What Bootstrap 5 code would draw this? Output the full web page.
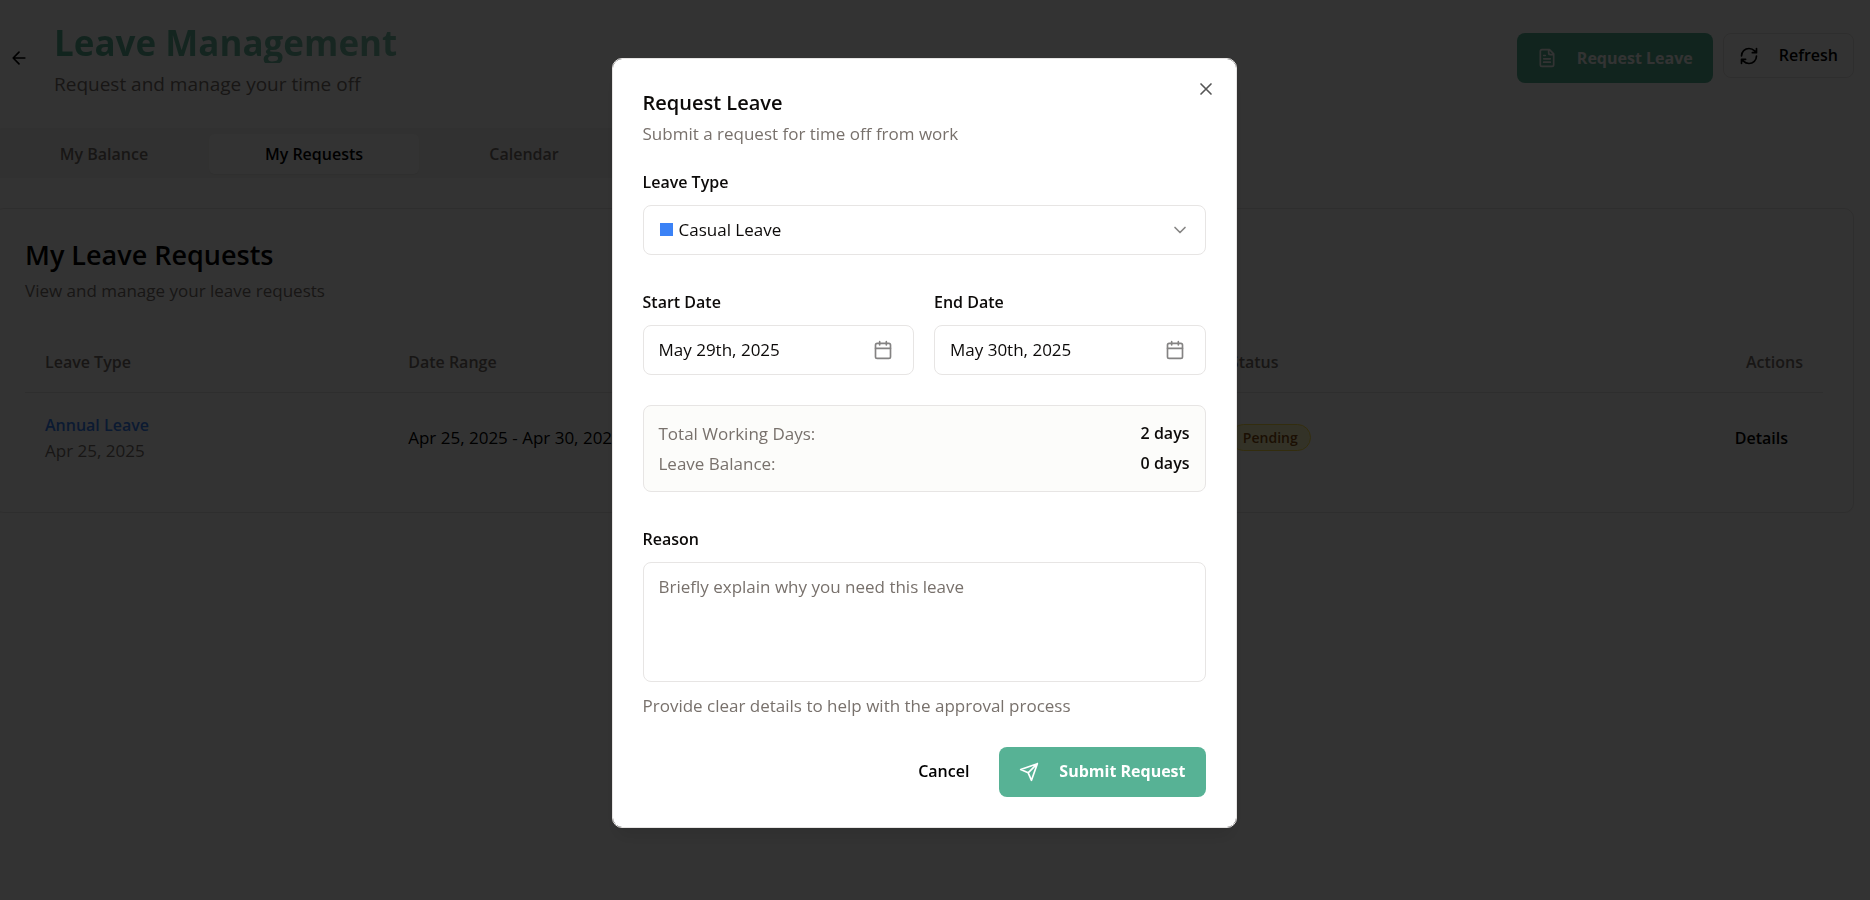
<!DOCTYPE html>
<html lang="en">
<head>
<meta charset="utf-8">
<meta name="viewport" content="width=device-width, initial-scale=1">
<title>Leave Management</title>
<link rel="stylesheet" href="https://cdn.jsdelivr.net/npm/bootstrap@5.3.0/dist/css/bootstrap.min.css">
<style>
  :root { --brand: #57b295; --line: #e7e5e4; --muted: #78716c; --ink: #0c0a09; }
  body { font-family: "Open Sans", "Noto Sans", sans-serif; font-size: 17px; line-height: 25px; color: #000; background: #fff; overflow: hidden; }
  .fw-mid { font-size: 16px; font-weight: 600; }
  .soft { color: var(--muted); }
  .ico { width: 20px; height: 20px; flex: none; fill: none; stroke: currentColor; stroke-width: 2; stroke-linecap: round; stroke-linejoin: round; }
  .btn { --bs-btn-font-size: 16px; --bs-btn-line-height: 25px; --bs-btn-font-weight: 600; --bs-btn-border-radius: 8px; --bs-btn-color: #000; }

  /* page */
  .leave-page { margin-left: -6px; padding: 23px 16px 0 0; }
  .back-btn { width: 50px; height: 50px; margin: 10px 10px 0 0; padding: 0; border: 0; }
  .page-title { font-size: 35px; line-height: 40px; font-weight: 700; margin: 0; color: transparent; background: linear-gradient(90deg, #57b295, #7cc2ab); background-clip: text; -webkit-background-clip: text; }
  .page-sub { font-size: 19px; line-height: 30px; margin: 6px 0 0; }
  .head-actions { padding-top: 10px; gap: 10px; }
  .brand-btn { --bs-btn-bg: var(--brand); --bs-btn-color: #fff; --bs-btn-hover-bg: #4aa186; --bs-btn-hover-color: #fff; height: 50px; gap: 20px; padding: 0 20px; border: 0; font-weight: 700; }
  .refresh-btn { height: 45px; gap: 20px; padding: 0 15px; border-color: var(--line); }
  .tab-strip { width: 640px; margin-top: 29px; padding: 6px 5px; background: #f5f5f4; border-radius: 8px; height: 50px; }
  .tab-strip .nav-link { width: 210px; height: 40px; padding: 0; border-radius: 6px; color: var(--muted); font-size: 16px; font-weight: 600; }
  .tab-strip .nav-link.active { background: #fff; color: #000; box-shadow: 0 1px 2px rgba(0,0,0,.06); }
  .req-card { margin-top: 30px; padding: 30px; border-color: #e7e5e4; border-radius: 10px; box-shadow: 0 1px 2px rgba(0,0,0,.05); }
  .req-card h2 { font-size: 27px; line-height: 30px; font-weight: 600; margin: 1px 0 8px; }
  .req-table { margin: 30px 0 0; table-layout: fixed; --bs-table-bg: transparent; --bs-table-color: #000; }
  .req-table th { height: 59px; padding: 0 20px; vertical-align: middle; color: var(--muted); font-size: 16px; font-weight: 600; border-color: #e7e5e4; }
  .req-table td { height: 90px; padding: 0 20px; vertical-align: middle; border: 0; }
  .type-link { color: #3b82f6; text-decoration: none; }
  .status-pill { font-size: 14px; line-height: 19px; font-weight: 600; padding: 3px 12px; color: #854d0e; background: #fef9c3; border: 1px solid #fde047; }
  .details-btn { padding: 0 15px; border: 0; }

  /* dialog */
  .shade { background: rgba(0,0,0,.8); padding: 0 22px 15px 0; }
  .req-dialog { width: 625px; max-width: 100%; margin: 0; pointer-events: auto; }
  .req-dialog .modal-content { color: var(--ink); padding: 30px; border: 1px solid var(--line); border-radius: 10px; box-shadow: 0 12px 18px -4px rgba(0,0,0,.1); }
  .req-dialog h2 { font-size: 20px; line-height: 23px; font-weight: 600; margin: 2px 0 7px; }
  .close-x { position: absolute; top: 20px; right: 20px; padding: 0; border: 0; background: none; line-height: 0; color: #555; }
  .req-dialog label { display: block; font-size: 16px; font-weight: 600; margin-bottom: 11px; line-height: 24px; }
  .field, .req-dialog .form-select { display: flex; width: 100%; height: 50px; padding: 0 15px; border: 1px solid var(--line); border-radius: 8px; background-color: #fff; color: var(--ink); font-size: 17px; line-height: 25px; }
  .req-dialog .form-select { padding: 0 44px 0 35px; background-image: linear-gradient(#3b82f6, #3b82f6), url("data:image/svg+xml,%3Csvg xmlns='http://www.w3.org/2000/svg' viewBox='0 0 24 24' fill='none' stroke='%23868584' stroke-width='2' stroke-linecap='round' stroke-linejoin='round'%3E%3Cpath d='m6 9 6 6 6-6'/%3E%3C/svg%3E"); background-size: 13px 13px, 20px 20px; background-position: left 16px center, right 15px center; }
  .date-pair { display: grid; grid-template-columns: 1fr 1fr; gap: 20px; margin-bottom: 30px; }
  .date-field { padding-right: 20px; }
  .date-field .ico { opacity: .5; }
  .totals { display: grid; gap: 5px; padding: 15px; border: 1px solid var(--line); border-radius: 8px; background: #fcfcfa; }
  .totals, .dlg-form-row { margin-bottom: 35px; }
  textarea.field { height: 120px; padding: 11px 15px; resize: none; }
  textarea::placeholder { color: var(--muted); }
  .hint { margin: 11px 0 29px; }
  .foot-actions { gap: 10px; }
  .cancel-btn { height: 50px; padding: 0 20px; border: 0; }
</style>
</head>
<body>
<main class="leave-page">
  <header class="d-flex align-items-start justify-content-between">
    <div class="d-flex align-items-start">
      <button class="btn back-btn d-flex align-items-center justify-content-center" type="button" aria-label="Back"><svg class="ico" viewBox="0 0 24 24"><path d="m12 19-7-7 7-7M19 12H5"/></svg></button>
      <div>
        <h1 class="page-title">Leave Management</h1>
        <p class="page-sub soft">Request and manage your time off</p>
      </div>
    </div>
    <div class="head-actions d-flex align-items-start">
      <button class="btn brand-btn d-flex align-items-center" type="button"><svg class="ico" viewBox="0 0 24 24"><path d="M15 2H6a2 2 0 0 0-2 2v16a2 2 0 0 0 2 2h12a2 2 0 0 0 2-2V7ZM14 2v4a2 2 0 0 0 2 2h4M10 9H8M16 13H8M16 17H8"/></svg>Request Leave</button>
      <button class="btn refresh-btn d-flex align-items-center" type="button"><svg class="ico" viewBox="0 0 24 24"><path d="M3 12a9 9 0 0 1 9-9 9.75 9.75 0 0 1 6.74 2.74L21 8M21 3v5h-5M21 12a9 9 0 0 1-9 9 9.75 9.75 0 0 1-6.74-2.74L3 16M8 16H3v5"/></svg>Refresh</button>
    </div>
  </header>

  <nav class="nav tab-strip flex-nowrap">
    <a class="nav-link d-flex align-items-center justify-content-center" href="#balance">My Balance</a>
    <a class="nav-link active d-flex align-items-center justify-content-center" href="#requests">My Requests</a>
    <a class="nav-link d-flex align-items-center justify-content-center" href="#calendar">Calendar</a>
  </nav>

  <section class="card req-card">
    <h2>My Leave Requests</h2>
    <p class="soft mb-0">View and manage your leave requests</p>
    <table class="table req-table">
      <colgroup><col style="width:20.2%"><col style="width:45.7%"><col><col style="width:14%"></colgroup>
      <thead><tr><th>Leave Type</th><th>Date Range</th><th>Status</th><th class="text-end">Actions</th></tr></thead>
      <tbody><tr>
        <td><a class="type-link fw-mid" href="#annual">Annual Leave</a><div class="soft">Apr 25, 2025</div></td>
        <td>Apr 25, 2025 - Apr 30, 2025</td>
        <td><span class="badge rounded-pill status-pill">Pending</span></td>
        <td class="text-end"><button class="btn details-btn" type="button">Details</button></td>
      </tr></tbody>
    </table>
  </section>
</main>

<div class="modal show shade d-flex align-items-center justify-content-center" tabindex="-1" role="dialog" aria-modal="true" aria-labelledby="dlg-title">
  <div class="modal-dialog req-dialog">
    <form class="modal-content">
      <button class="close-x" type="button" aria-label="Close"><svg class="ico" viewBox="0 0 24 24"><path d="M18 6 6 18M6 6l12 12"/></svg></button>
      <h2 id="dlg-title">Request Leave</h2>
      <p class="soft mb-4">Submit a request for time off from work</p>
      <div class="dlg-form-row">
        <label for="type">Leave Type</label>
        <select id="type" class="form-select"><option>Casual Leave</option></select>
      </div>
      <div class="date-pair">
        <div>
          <label for="start">Start Date</label>
          <button id="start" type="button" class="field date-field align-items-center justify-content-between">May 29th, 2025<svg class="ico" viewBox="0 0 24 24"><path d="M8 2v4M16 2v4M3 10h18"/><rect x="3" y="4" width="18" height="18" rx="2"/></svg></button>
        </div>
        <div>
          <label for="end">End Date</label>
          <button id="end" type="button" class="field date-field align-items-center justify-content-between">May 30th, 2025<svg class="ico" viewBox="0 0 24 24"><path d="M8 2v4M16 2v4M3 10h18"/><rect x="3" y="4" width="18" height="18" rx="2"/></svg></button>
        </div>
      </div>
      <div class="totals">
        <div class="d-flex justify-content-between"><span class="soft">Total Working Days:</span><span class="fw-mid">2 days</span></div>
        <div class="d-flex justify-content-between"><span class="soft">Leave Balance:</span><span class="fw-mid">0 days</span></div>
      </div>
      <label for="reason">Reason</label>
      <textarea id="reason" class="field" placeholder="Briefly explain why you need this leave"></textarea>
      <p class="soft hint">Provide clear details to help with the approval process</p>
      <div class="foot-actions d-flex justify-content-end">
        <button class="btn cancel-btn" type="button">Cancel</button>
        <button class="btn brand-btn d-flex align-items-center" type="submit"><svg class="ico" viewBox="0 0 24 24"><path d="m22 2-7 20-4-9-9-4ZM22 2 11 13"/></svg>Submit Request</button>
      </div>
    </form>
  </div>
</div>
<script src="https://cdn.jsdelivr.net/npm/bootstrap@5.3.0/dist/js/bootstrap.bundle.min.js"></script>
</body>
</html>
